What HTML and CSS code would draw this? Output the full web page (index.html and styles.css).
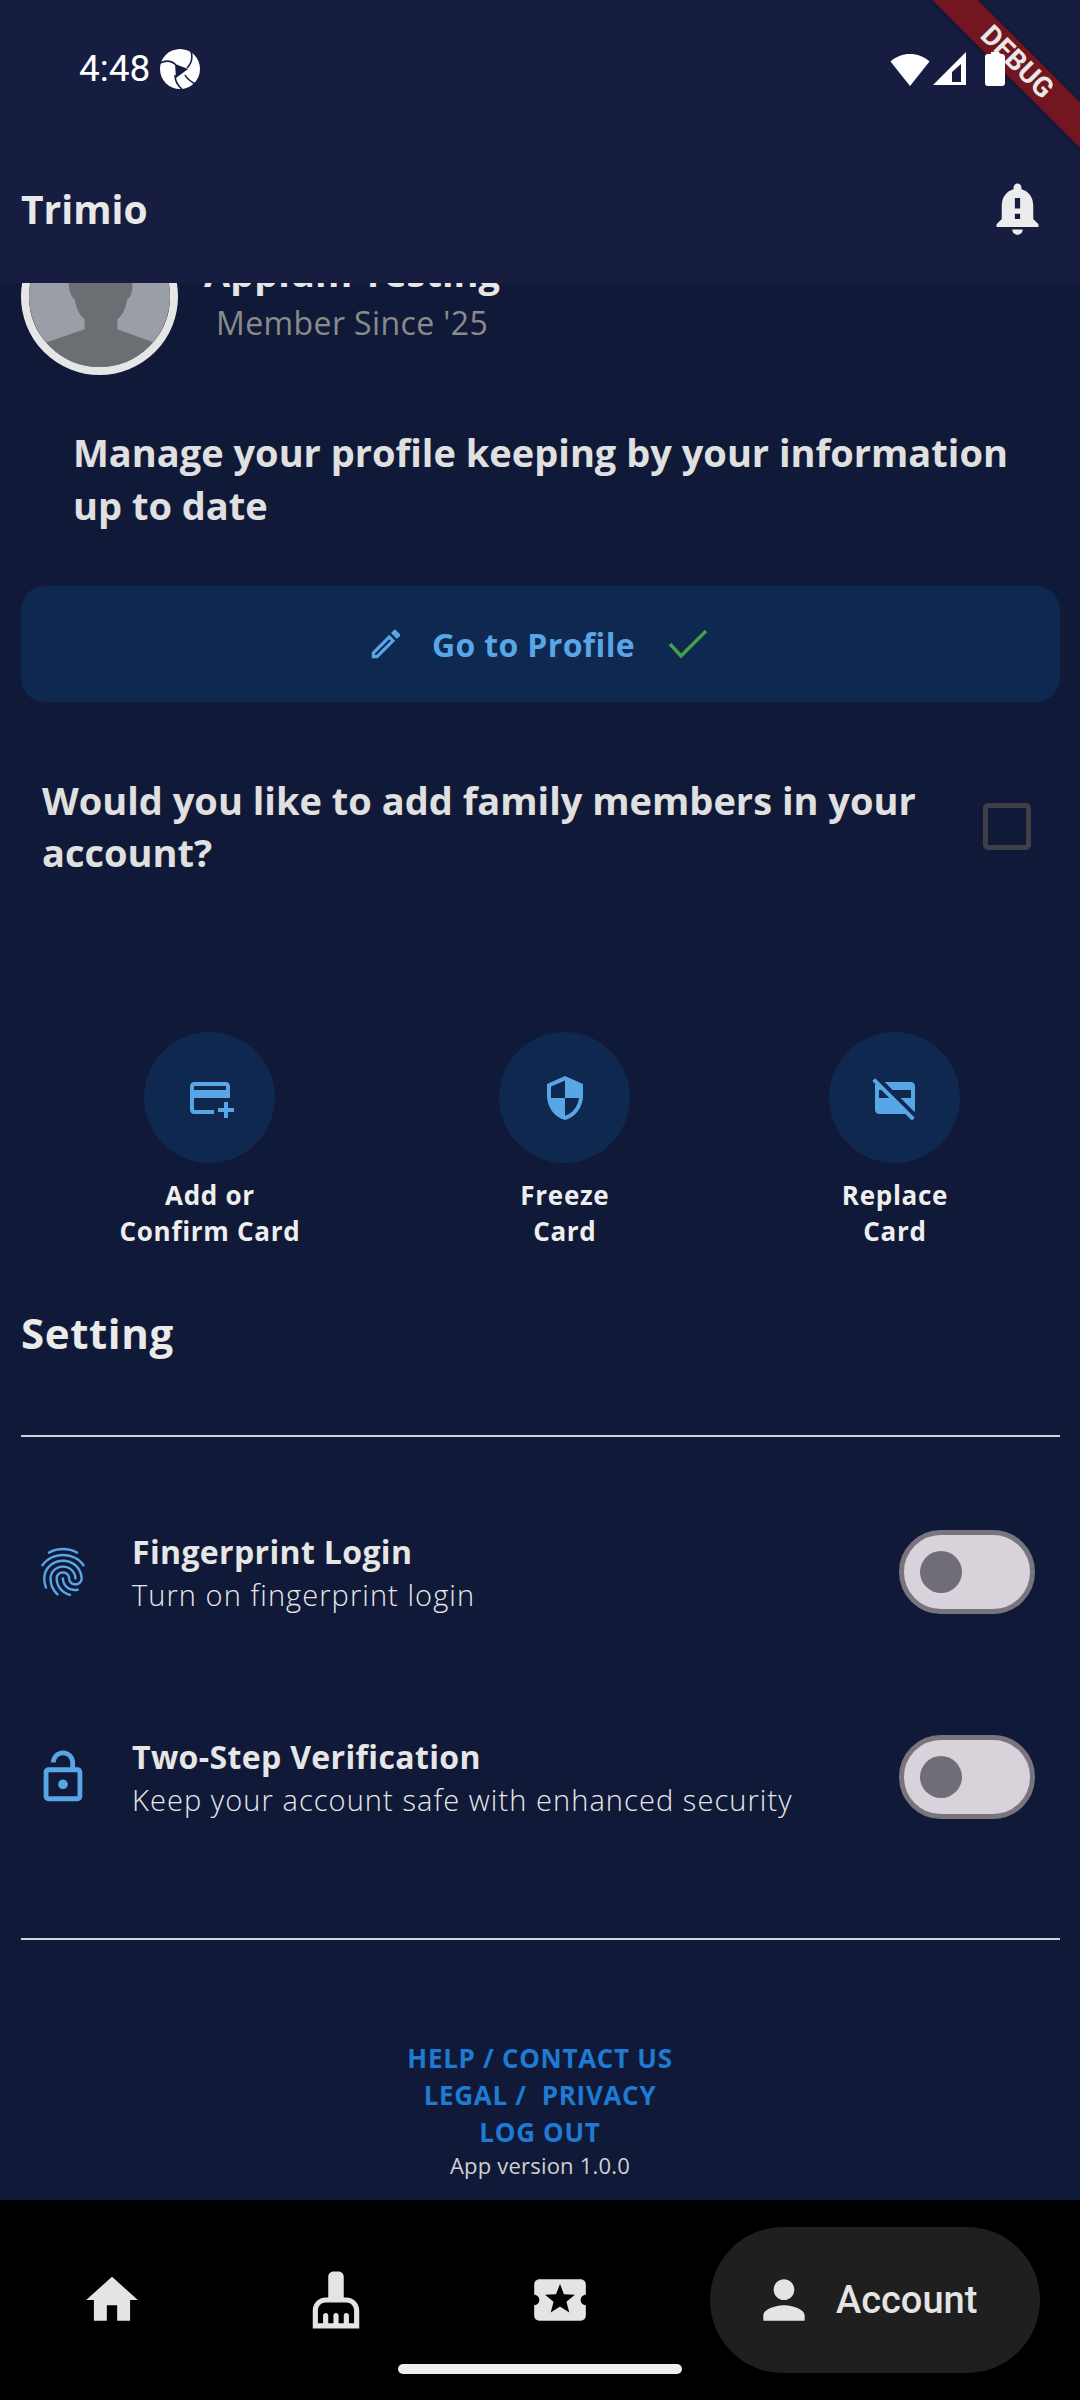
FILE: index.html
```html
<!DOCTYPE html>
<html lang="en">
<head>
<meta charset="utf-8">
<title>Trimio</title>
<link rel="stylesheet" href="styles.css">
</head>
<body>
<div class="app">
  <div class="debug-banner"><span>DEBUG</span></div>
  <header class="header">
    <div class="status">
      <div class="status-left">
        <span class="time">4:48</span>
        <svg class="logo" viewBox="0 0 40 40"><circle cx="20" cy="20" r="20" fill="#fff"/><path d="M15 15 L28 20 L16 29 Z" fill="#161d40"/><path d="M31 2 C33 9 32 14 27 19 M0 14 C6 11 12 12 16 16 M15 26 C15 32 17 36 22 40 M35 35 C30 32 27 30 25 26" fill="none" stroke="#161d40" stroke-width="1.600"/></svg>
      </div>
      <div class="status-right">
        <svg class="wifi" viewBox="0 0 40 33"><path d="M20 33 L0.500 8.500 C11 -1.500 29 -1.500 39.500 8.500 Z" fill="#fff"/></svg>
        <svg class="signal" viewBox="0 0 33 34"><path fill-rule="evenodd" d="M33 0 V33 H0 Z M28 12 L19 20 V30 H28 Z" fill="#fff"/></svg>
        <svg class="battery" viewBox="0 0 20 34"><path d="M6 0 H14 V2 H17 C19 2 20 3 20 5 V31 C20 33 19 34 17 34 H3 C1 34 0 33 0 31 V5 C0 3 1 2 3 2 H6 Z" fill="#fff"/></svg>
      </div>
    </div>
    <div class="titlebar">
      <h1 class="brand">Trimio</h1>
      <svg class="bell" viewBox="0 0 24 24"><path d="M18 16v-5c0-3.070-1.630-5.640-4.500-6.320V4c0-.83-.67-1.500-1.500-1.500s-1.500.67-1.500 1.500v.68C7.640 5.360 6 7.920 6 11v5l-2 2v1h16v-1l-2-2zm-5 0h-2v-2h2v2zm0-4h-2V8h2v4zm-1 10c1.100 0 2-.9 2-2h-4c0 1.100.9 2 2 2z"/></svg>
    </div>
  </header>

  <main class="content">
    <section class="profile">
      <div class="avatar">
        <svg viewBox="0 0 142 142"><rect width="142" height="142" fill="#9a9ea6"/><path d="M72 20 C92 20 104 38 104 57 C105 66 102 72 99 74 C97 84 94 90 89 94 L89 104 L125 117 L142 125 V142 H0 V125 L18 117 L56 104 L56 94 C51 90 48 84 46 74 C43 72 40 66 40 57 C40 38 52 20 72 20 Z" fill="#6b6f73"/></svg>
      </div>
      <div class="who">
        <div class="who-name">Appium Testing</div>
        <div class="who-since">Member Since '25</div>
      </div>
    </section>

    <p class="intro">Manage your profile keeping by your information up to date</p>

    <button class="profile-btn" type="button">
      <svg class="pencil" viewBox="0 0 24 24"><path d="M14.060 9.020l.92.92L5.920 19H5v-.92l9.060-9.060M17.660 3c-.25 0-.51.1-.7.29l-1.830 1.830 3.750 3.750 1.830-1.830c.39-.39.39-1.020 0-1.410l-2.340-2.340c-.2-.2-.45-.29-.71-.29zm-3.600 3.190L3 17.250V21h3.750L17.810 9.940l-3.750-3.750z"/></svg>
      <span>Go to Profile</span>
      <svg class="tick" viewBox="0 0 40 30"><path d="M2 15 L13 27 L38 2" fill="none" stroke="#43a047" stroke-width="3.500"/></svg>
    </button>

    <section class="family">
      <p class="family-text">Would you like to add family members in your account?</p>
      <span class="checkbox"></span>
    </section>

    <section class="actions">
      <div class="action">
        <span class="action-circle"><svg viewBox="0 0 24 24"><path d="M20 4H4c-1.110 0-1.990.89-1.990 2L2 18c0 1.110.89 2 2 2h10v-2H4v-6h18V6c0-1.110-.89-2-2-2zm0 4H4V6h16v2zm4 9v2h-3v3h-2v-3h-3v-2h3v-3h2v3h3z"/></svg></span>
        <span class="action-label">Add or<br>Confirm Card</span>
      </div>
      <div class="action">
        <span class="action-circle"><svg viewBox="0 0 24 24"><path d="M12 1L3 5v6c0 5.550 3.840 10.740 9 12 5.160-1.260 9-6.450 9-12V5l-9-4zm0 10.990h7c-.53 4.120-3.280 7.790-7 8.940V12H5V6.300l7-3.110v8.800z"/></svg></span>
        <span class="action-label">Freeze<br>Card</span>
      </div>
      <div class="action">
        <span class="action-circle"><svg viewBox="0 0 24 24"><path d="M21.900 21.900 2.100 2.100.69 3.510 2.200 5.020C2.070 5.320 2 5.650 2 6v12c0 1.100.9 2 2 2h13.170l3.320 3.310L21.900 21.900zM4 12V8h1.170l4 4H4zm2.830-8H20c1.100 0 2 .9 2 2v12c0 .34-.08.66-.23.94L14.830 12H20V8h-9.170l-4-4z"/></svg></span>
        <span class="action-label">Replace<br>Card</span>
      </div>
    </section>

    <h2 class="setting-title">Setting</h2>
    <hr class="rule rule-top">

    <section class="setting-row">
      <svg class="setting-icon" viewBox="0 0 24 24"><path d="M17.810 4.470c-.08 0-.16-.02-.23-.06C15.660 3.420 14 3 12.010 3c-1.980 0-3.860.47-5.570 1.410-.24.13-.54.04-.68-.2-.13-.24-.04-.55.2-.68C7.820 2.520 9.860 2 12.010 2c2.130 0 3.990.47 6.030 1.520.25.13.34.43.21.67-.09.18-.26.28-.44.28zM3.500 9.720c-.1 0-.2-.03-.29-.09-.23-.16-.28-.47-.12-.7.99-1.400 2.250-2.500 3.750-3.270C9.980 4.040 14 4.030 17.150 5.650c1.500.77 2.760 1.860 3.750 3.250.16.22.11.54-.12.7-.23.16-.54.11-.7-.12-.9-1.260-2.040-2.250-3.390-2.940-2.870-1.470-6.540-1.470-9.400.01-1.360.7-2.500 1.700-3.400 2.960-.08.14-.23.21-.39.21zm6.250 12.070c-.13 0-.26-.05-.35-.15-.87-.87-1.340-1.430-2.010-2.640-.69-1.230-1.050-2.730-1.050-4.340 0-2.970 2.540-5.390 5.660-5.390s5.660 2.420 5.660 5.390c0 .28-.22.5-.5.5s-.5-.22-.5-.5c0-2.420-2.090-4.390-4.660-4.390s-4.660 1.970-4.660 4.390c0 1.440.32 2.770.93 3.850.64 1.150 1.080 1.640 1.850 2.420.19.2.19.51 0 .71-.11.1-.24.15-.37.15zm7.170-1.850c-1.190 0-2.240-.3-3.100-.89-1.490-1.010-2.380-2.650-2.380-4.390 0-.28.22-.5.5-.5s.5.22.5.5c0 1.410.72 2.740 1.940 3.560.71.48 1.540.71 2.540.71.24 0 .64-.03 1.040-.1.27-.05.53.13.58.41.05.27-.13.53-.41.58-.57.11-1.070.12-1.210.12zM14.910 22c-.04 0-.09-.01-.13-.02-1.590-.44-2.630-1.030-3.720-2.100-1.400-1.390-2.170-3.240-2.170-5.220 0-1.620 1.380-2.940 3.080-2.940s3.080 1.320 3.080 2.940c0 1.070.93 1.940 2.080 1.940s2.080-.87 2.080-1.940c0-3.770-3.250-6.830-7.250-6.830-2.840 0-5.440 1.580-6.610 4.030-.39.81-.59 1.760-.59 2.800 0 .78.07 2.010.67 3.610.1.26-.03.55-.29.64-.26.1-.55-.04-.64-.29-.49-1.310-.73-2.610-.73-3.960 0-1.200.23-2.290.68-3.240 1.330-2.790 4.280-4.600 7.510-4.600 4.550 0 8.250 3.510 8.250 7.830 0 1.620-1.380 2.940-3.080 2.940s-3.080-1.320-3.080-2.940c0-1.070-.93-1.940-2.080-1.940s-2.080.87-2.080 1.940c0 1.710.66 3.310 1.870 4.510.95.94 1.860 1.460 3.270 1.850.27.07.42.35.35.61-.05.23-.26.38-.47.38z"/></svg>
      <div class="setting-text">
        <div class="setting-name">Fingerprint Login</div>
        <div class="setting-desc">Turn on fingerprint login</div>
      </div>
      <span class="toggle"><span class="thumb"></span></span>
    </section>

    <section class="setting-row setting-row-second">
      <svg class="setting-icon" viewBox="0 0 24 24"><path d="M12 17c1.100 0 2-.9 2-2s-.9-2-2-2-2 .9-2 2 .9 2 2 2zm6-9h-1V6c0-2.760-2.240-5-5-5S7 3.240 7 6h2c0-1.660 1.340-3 3-3s3 1.340 3 3v2H6c-1.100 0-2 .9-2 2v10c0 1.100.9 2 2 2h12c1.100 0 2-.9 2-2V10c0-1.100-.9-2-2-2zm0 12H6V10h12v10z"/></svg>
      <div class="setting-text">
        <div class="setting-name">Two-Step Verification</div>
        <div class="setting-desc">Keep your account safe with enhanced security</div>
      </div>
      <span class="toggle"><span class="thumb"></span></span>
    </section>

    <hr class="rule rule-bottom">

    <footer class="links">
      <a class="link">HELP / CONTACT US</a>
      <a class="link">LEGAL /&nbsp; PRIVACY</a>
      <a class="link">LOG OUT</a>
      <span class="version">App version 1.0.0</span>
    </footer>
  </main>

  <nav class="nav">
    <span class="nav-item"><svg viewBox="0 0 24 24"><path d="M10 20v-6h4v6h5v-8h3L12 3 2 12h3v8z"/></svg></span>
    <span class="nav-item"><svg viewBox="0 0 24 24"><path d="M16 11h-1V3c0-1.100-.9-2-2-2h-2c-1.100 0-2 .9-2 2v8H8c-2.760 0-5 2.240-5 5v7h18v-7c0-2.760-2.240-5-5-5zm3 10h-2v-3c0-.55-.45-1-1-1s-1 .45-1 1v3h-2v-3c0-.55-.45-1-1-1s-1 .45-1 1v3H9v-3c0-.55-.45-1-1-1s-1 .45-1 1v3H5v-5c0-1.650 1.350-3 3-3h8c1.650 0 3 1.350 3 3v5z"/></svg></span>
    <span class="nav-item"><svg viewBox="0 0 24 24"><path d="M20 12c0-1.100.9-2 2-2V6c0-1.100-.9-2-2-2H4c-1.100 0-1.990.9-1.990 2v4c1.100 0 1.990.9 1.990 2s-.89 2-2 2v4c0 1.100.9 2 2 2h16c1.100 0 2-.9 2-2v-4c-1.100 0-2-.9-2-2zm-4.420 4.800L12 14.500l-3.580 2.300 1.080-4.120-3.290-2.690 4.240-.25L12 5.800l1.540 3.950 4.240.25-3.290 2.690 1.090 4.110z"/></svg></span>
    <span class="nav-pill">
      <svg viewBox="0 0 24 24"><path d="M12 12c2.210 0 4-1.790 4-4s-1.790-4-4-4-4 1.790-4 4 1.790 4 4 4zm0 2c-2.670 0-8 1.340-8 4v2h16v-2c0-2.660-5.330-4-8-4z"/></svg>
      <span class="nav-label">Account</span>
    </span>
    <span class="home-indicator"></span>
  </nav>
</div>
</body>
</html>
```

FILE: styles.css
```css
* { box-sizing: border-box; }
html, body { margin: 0; padding: 0; }
body { width: 1080px; height: 2400px; overflow: hidden; background: #101a38; font-family: "Open Sans", sans-serif; }
.app { position: relative; width: 1080px; height: 2400px; display: flex; flex-direction: column; overflow: hidden; }

.debug-banner { position: absolute; left: 817px; top: 46px; width: 400px; height: 32px; background: #74161f; transform: rotate(45deg); display: flex; align-items: center; justify-content: center; z-index: 1; box-shadow: 0 0 8px rgba(0,0,0,.3); }
.debug-banner span { font-family: Roboto, sans-serif; font-weight: 700; font-size: 28px; line-height: 32px; color: #e8e8e8; }

.header { height: 283px; flex: none; background: #161d40; }
.status { height: 138px; padding: 0 75px 0 79px; display: flex; justify-content: space-between; align-items: center; }
.status-left { display: flex; align-items: center; gap: 10px; }
.time { font-family: Roboto, sans-serif; font-size: 37px; color: #fff; line-height: 40px; }
.logo { width: 40px; height: 40px; }
.status-right { display: flex; align-items: center; position: relative; z-index: 2; }
.wifi { width: 40px; height: 33px; }
.signal { width: 33px; height: 34px; margin-left: 3px; }
.battery { width: 20px; height: 34px; margin-left: 19px; }

.titlebar { height: 142px; padding: 0 31px 2px 21px; display: flex; justify-content: space-between; align-items: center; position: relative; z-index: 2; }
.brand { margin: 0; font-size: 39px; font-weight: 700; color: #e8e8e8; }
.bell { width: 63px; height: 63px; fill: #ececec; }

.content { flex: 1; overflow: hidden; min-height: 0; }

.profile { margin-top: -65px; padding-left: 21px; display: flex; gap: 26px; height: 158px; }
.avatar { width: 157px; height: 157px; border-radius: 50%; border: 8px solid #e6e6e6; overflow: hidden; flex: none; }
.avatar svg { display: block; width: 100%; height: 100%; }
.who-name { font-size: 38px; font-weight: 700; line-height: 52px; color: #e6e6e6; margin-top: 28px; }
.who-since { font-size: 32px; letter-spacing: .4px; line-height: 38px; color: #8a8a8a; margin: 6px 0 0 12px; }

.intro { margin: 50px 0 0; padding: 0 40px 0 73px; font-size: 38px; font-weight: 700; line-height: 53px; color: #e0e0e0; }

.profile-btn { display: flex; width: 1039px; height: 116px; margin: 54px 0 0 21px; padding: 0 6px 0 0; border: 0; border-radius: 24px; background: #0f2850; align-items: center; justify-content: center; color: #58a6e6; font-family: inherit; font-size: 32px; font-weight: 700; letter-spacing: .35px; }
.pencil { width: 38px; height: 38px; fill: #58a6e6; margin-right: 27px; }
.tick { width: 40px; height: 30px; margin-left: 33px; }

.family { margin-top: 72px; padding: 0 49px 0 42px; display: flex; align-items: center; justify-content: space-between; }
.family-text { margin: 0; width: 900px; font-size: 38px; font-weight: 700; line-height: 52px; color: #e0e0e0; }
.checkbox { width: 48px; height: 47px; border: 5px solid #3f3f46; border-radius: 5px; flex: none; }

.actions { margin: 154px 20px 0; display: flex; justify-content: space-around; }
.action { display: flex; flex-direction: column; align-items: center; }
.action-circle { width: 131px; height: 131px; border-radius: 50%; background: #0f2850; display: flex; align-items: center; justify-content: center; }
.action-circle svg { width: 48px; height: 48px; fill: #58a6e6; }
.action-label { margin-top: 14px; text-align: center; font-size: 26px; font-weight: 700; letter-spacing: .7px; line-height: 36px; color: #eeeeee; }

.setting-title { margin: 55px 0 0 21px; font-size: 42px; font-weight: 700; letter-spacing: .6px; line-height: 58px; color: #eaeaea; }
.rule { border: 0; height: 2px; background: #d3d0da; margin: 0 20px 0 21px; }
.rule-top { margin-top: 73px; }
.rule-bottom { margin-top: 119px; }

.setting-row { margin-top: 93px; height: 84px; padding: 0 45px 0 34px; display: flex; align-items: center; }
.setting-row-second { margin-top: 121px; }
.setting-icon { width: 58px; height: 58px; fill: #58a6e6; flex: none; }
.setting-text { flex: 1; margin: 2px 0 0 40px; }
.setting-name { font-size: 32px; font-weight: 700; letter-spacing: .35px; line-height: 43px; color: #e6e6e6; }
.setting-desc { font-size: 29px; font-weight: 300; letter-spacing: 1.07px; line-height: 43px; color: #e8e8e8; }
.toggle { width: 136px; height: 84px; border: 5px solid #79747e; border-radius: 42px; background: #d8d2da; display: flex; align-items: center; padding-left: 16px; flex: none; }
.thumb { width: 42px; height: 42px; border-radius: 50%; background: #716d78; }

.links { margin-top: 100px; display: flex; flex-direction: column; align-items: center; }
.link { font-size: 26px; font-weight: 700; letter-spacing: .7px; line-height: 37px; color: #1e7ad2; white-space: nowrap; }
.version { margin-top: -1px; font-size: 22px; letter-spacing: .2px; line-height: 30px; color: #d0d0d0; }

.nav { height: 200px; flex: none; background: #000; position: relative; display: flex; align-items: flex-start; }
.nav-item { width: 224px; height: 62px; margin-top: 69px; display: flex; justify-content: center; }
.nav-item svg { width: 62px; height: 62px; fill: #e4e4e4; }
.nav-pill { position: absolute; left: 710px; top: 27px; width: 330px; height: 146px; border-radius: 73px; background: #1f1f1f; display: flex; align-items: center; padding-left: 43px; }
.nav-pill svg { width: 62px; height: 62px; fill: #e4e4e4; flex: none; }
.nav-label { margin-left: 21px; font-family: Roboto, sans-serif; font-weight: 500; font-size: 38px; color: #e4e4e4; }
.home-indicator { position: absolute; left: 398px; top: 164px; width: 284px; height: 10px; border-radius: 5px; background: #eeeeee; }
```
